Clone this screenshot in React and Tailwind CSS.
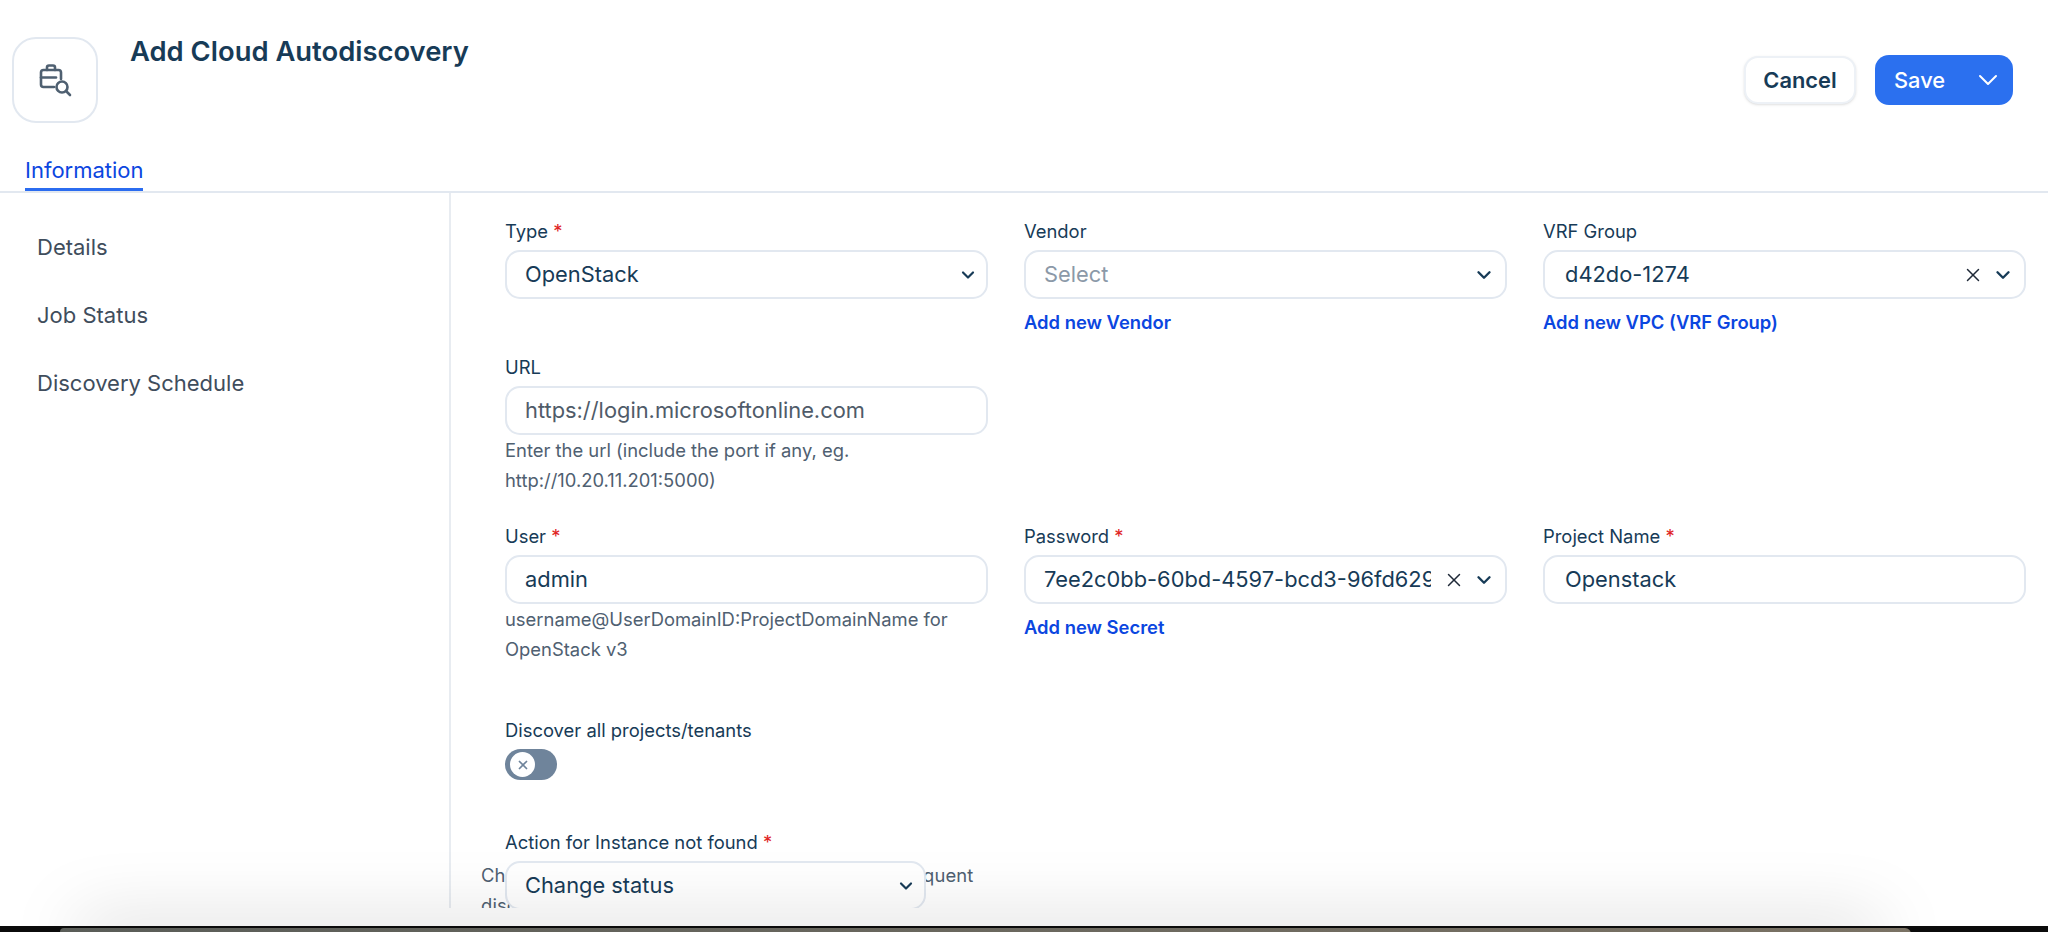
import React from "react";
import { ChevronDown, X } from "lucide-react";

function Label({ children, req }) {
  return (
    <div className="text-[18.4px] leading-[28px] text-[#173b57] h-[28px]">
      {children}
      {req && <span className="text-[#e02424]"> *</span>}
    </div>
  );
}

function Box({ children, className = "" }) {
  return (
    <div className={"h-[49px] mt-[5px] flex items-center rounded-[15px] border-2 border-[#e2e8f0] bg-white text-[21.85px] text-[#173b57] " + className}>
      {children}
    </div>
  );
}

function Chevron({ s = 20 }) {
  return <ChevronDown size={s} strokeWidth={2.6} className="text-[#173b57] shrink-0" />;
}

function Clear() {
  return <X size={22} strokeWidth={1.6} className="text-[#1f2937] shrink-0" />;
}

function Hint({ children }) {
  return <div className="text-[18.4px] leading-[30px] text-[#4f6071]">{children}</div>;
}

function AddLink({ children }) {
  return <div className="mt-[9px] text-[18.4px] leading-[28px] font-semibold text-[#0b46e0]">{children}</div>;
}

export default function App() {
  return (
    <div className="h-[932px] w-[2048px] overflow-hidden bg-white relative font-['Inter',sans-serif] flex flex-col">
      <div className="flex h-[144px] shrink-0 pl-[12px] pr-[35px]">
        <div className="mt-[37px] h-[86px] w-[86px] rounded-[24px] border-2 border-[#e2e8f0] flex items-center justify-center">
          <svg width="36" height="36" viewBox="0 0 36 36" fill="none" stroke="#4f6071" strokeWidth="2.6" strokeLinecap="round" strokeLinejoin="round">
            <path d="M17 25H6.500A2.500 2.500 0 0 1 4 22.500V10.500A2.500 2.500 0 0 1 6.500 8H21.500A2.500 2.500 0 0 1 24 10.500V17" />
            <path d="M10 8V5.500A2 2 0 0 1 12 3.500H16A2 2 0 0 1 18 5.500V8" />
            <path d="M4 15.500H19" />
            <circle cx="25" cy="25" r="5.500" />
            <path d="M29.500 29.500L33 33" />
          </svg>
        </div>
        <div className="ml-[32px] mt-[34px] h-[34px] text-[27.4px] leading-[34px] font-semibold text-[#173b57]">Add Cloud Autodiscovery</div>
        <div className="ml-auto mt-[55px] flex items-start gap-[19px]">
          <button className="mt-[1px] h-[48px] w-[112px] rounded-[14px] border-2 border-[#edf1f6] bg-white text-[21.85px] font-semibold text-[#173b57] shadow-sm">Cancel</button>
          <button className="h-[50px] w-[138px] rounded-[14px] bg-[#2b70ef] text-white text-[21.85px] font-medium flex items-center pl-[19px] pr-[9px] justify-between">
            Save
            <ChevronDown size={32} strokeWidth={1.5} />
          </button>
        </div>
      </div>

      <div className="h-[49px] shrink-0 border-b-2 border-[#e2e8f0] pl-[25px]">
        <div className="w-[118px] h-[47px] border-b-[3px] border-[#2b6cf0] text-[22px] leading-[30px] pt-[11px] text-[#0b46e0]">Information</div>
      </div>

      <div className="flex h-[715px] shrink-0 items-start">
        <nav className="w-[449px] shrink-0 pl-[37px] pt-[39px] flex flex-col gap-[38px] text-[22px] leading-[30px] text-[#3f4d5c]">
          <div>Details</div>
          <div>Job Status</div>
          <div>Discovery Schedule</div>
        </nav>
        <div className="h-[715px] flex-1 border-l-2 border-[#e8ecf1] overflow-hidden pl-[54px] pt-[24px]">
          <div className="grid grid-cols-[483px_483px_483px] gap-x-[36px]">
            <div>
              <Label req>Type</Label>
              <Box className="pl-[18px] pr-[8px] justify-between">OpenStack<Chevron /></Box>
            </div>
            <div>
              <Label>Vendor</Label>
              <Box className="pl-[18px] pr-[10px] justify-between">
                <span className="text-[#8b99a8]">Select</span>
                <Chevron s={22} />
              </Box>
              <AddLink>Add new Vendor</AddLink>
            </div>
            <div>
              <Label>VRF Group</Label>
              <Box className="pl-[20px] pr-[10px] justify-between">
                d42do-1274
                <span className="flex items-center gap-[8px]"><Clear /><Chevron s={22} /></span>
              </Box>
              <AddLink>Add new VPC (VRF Group)</AddLink>
            </div>
          </div>

          <div className="mt-[17px] w-[483px]">
            <Label>URL</Label>
            <Box className="pl-[18px]"><span className="text-[#4f5b69]">https://login.microsoftonline.com</span></Box>
            <Hint>Enter the url (include the port if any, eg. http://10.20.11.201:5000)</Hint>
          </div>

          <div className="mt-[27px] grid grid-cols-[483px_483px_483px] gap-x-[36px]">
            <div>
              <Label req>User</Label>
              <Box className="pl-[18px]">admin</Box>
              <Hint>username@UserDomainID:ProjectDomainName for OpenStack v3</Hint>
            </div>
            <div>
              <Label req>Password</Label>
              <Box className="pl-[18px] pr-[10px]">
                <span className="flex-1 min-w-0 overflow-hidden whitespace-nowrap">7ee2c0bb-60bd-4597-bcd3-96fd629e3a01</span>
                <span className="flex items-center gap-[8px] ml-[12px]"><Clear /><Chevron s={22} /></span>
              </Box>
              <AddLink>Add new Secret</AddLink>
            </div>
            <div>
              <Label req>Project Name</Label>
              <Box className="pl-[20px]">Openstack</Box>
            </div>
          </div>

          <div className="mt-[52px]">
            <Label>Discover all projects/tenants</Label>
            <div className="mt-[5px] h-[31px] w-[52px] rounded-full bg-[#6f849b] flex items-center pl-[5px]">
              <div className="h-[25px] w-[25px] rounded-full bg-white flex items-center justify-center">
                <X size={14} strokeWidth={3} className="text-[#6f849b]" />
              </div>
            </div>
          </div>

          <div className="mt-[48px]">
            <Label req>Action for Instance not found</Label>
            <div className="relative pt-[5px]">
              <div className="absolute left-[-24px] top-[4px] w-[505px] text-[18.4px] leading-[30px] tracking-[0.12px] text-[#4f6071]">
                Change the status of instances not found in subsequent discovery
              </div>
              <Box className="relative !mt-0 w-[421px] pl-[18px] pr-[8px] justify-between">Change status<Chevron /></Box>
            </div>
          </div>
        </div>
      </div>

      <div className="absolute left-[78px] right-[168px] top-[926px] h-[20px] shadow-[0_0_70px_0_rgba(0,0,0,0.27)] pointer-events-none" />
      <div className="absolute left-0 right-0 top-[926px] bottom-0 bg-[#0b0b0b] pointer-events-none pt-[2px]">
        <div className="ml-[60px] w-[1851px] h-[6px] rounded-tl-[8px] rounded-tr-[12px] bg-gradient-to-r from-[#5a5d58] to-[#7a7264]" />
      </div>
    </div>
  );
}
